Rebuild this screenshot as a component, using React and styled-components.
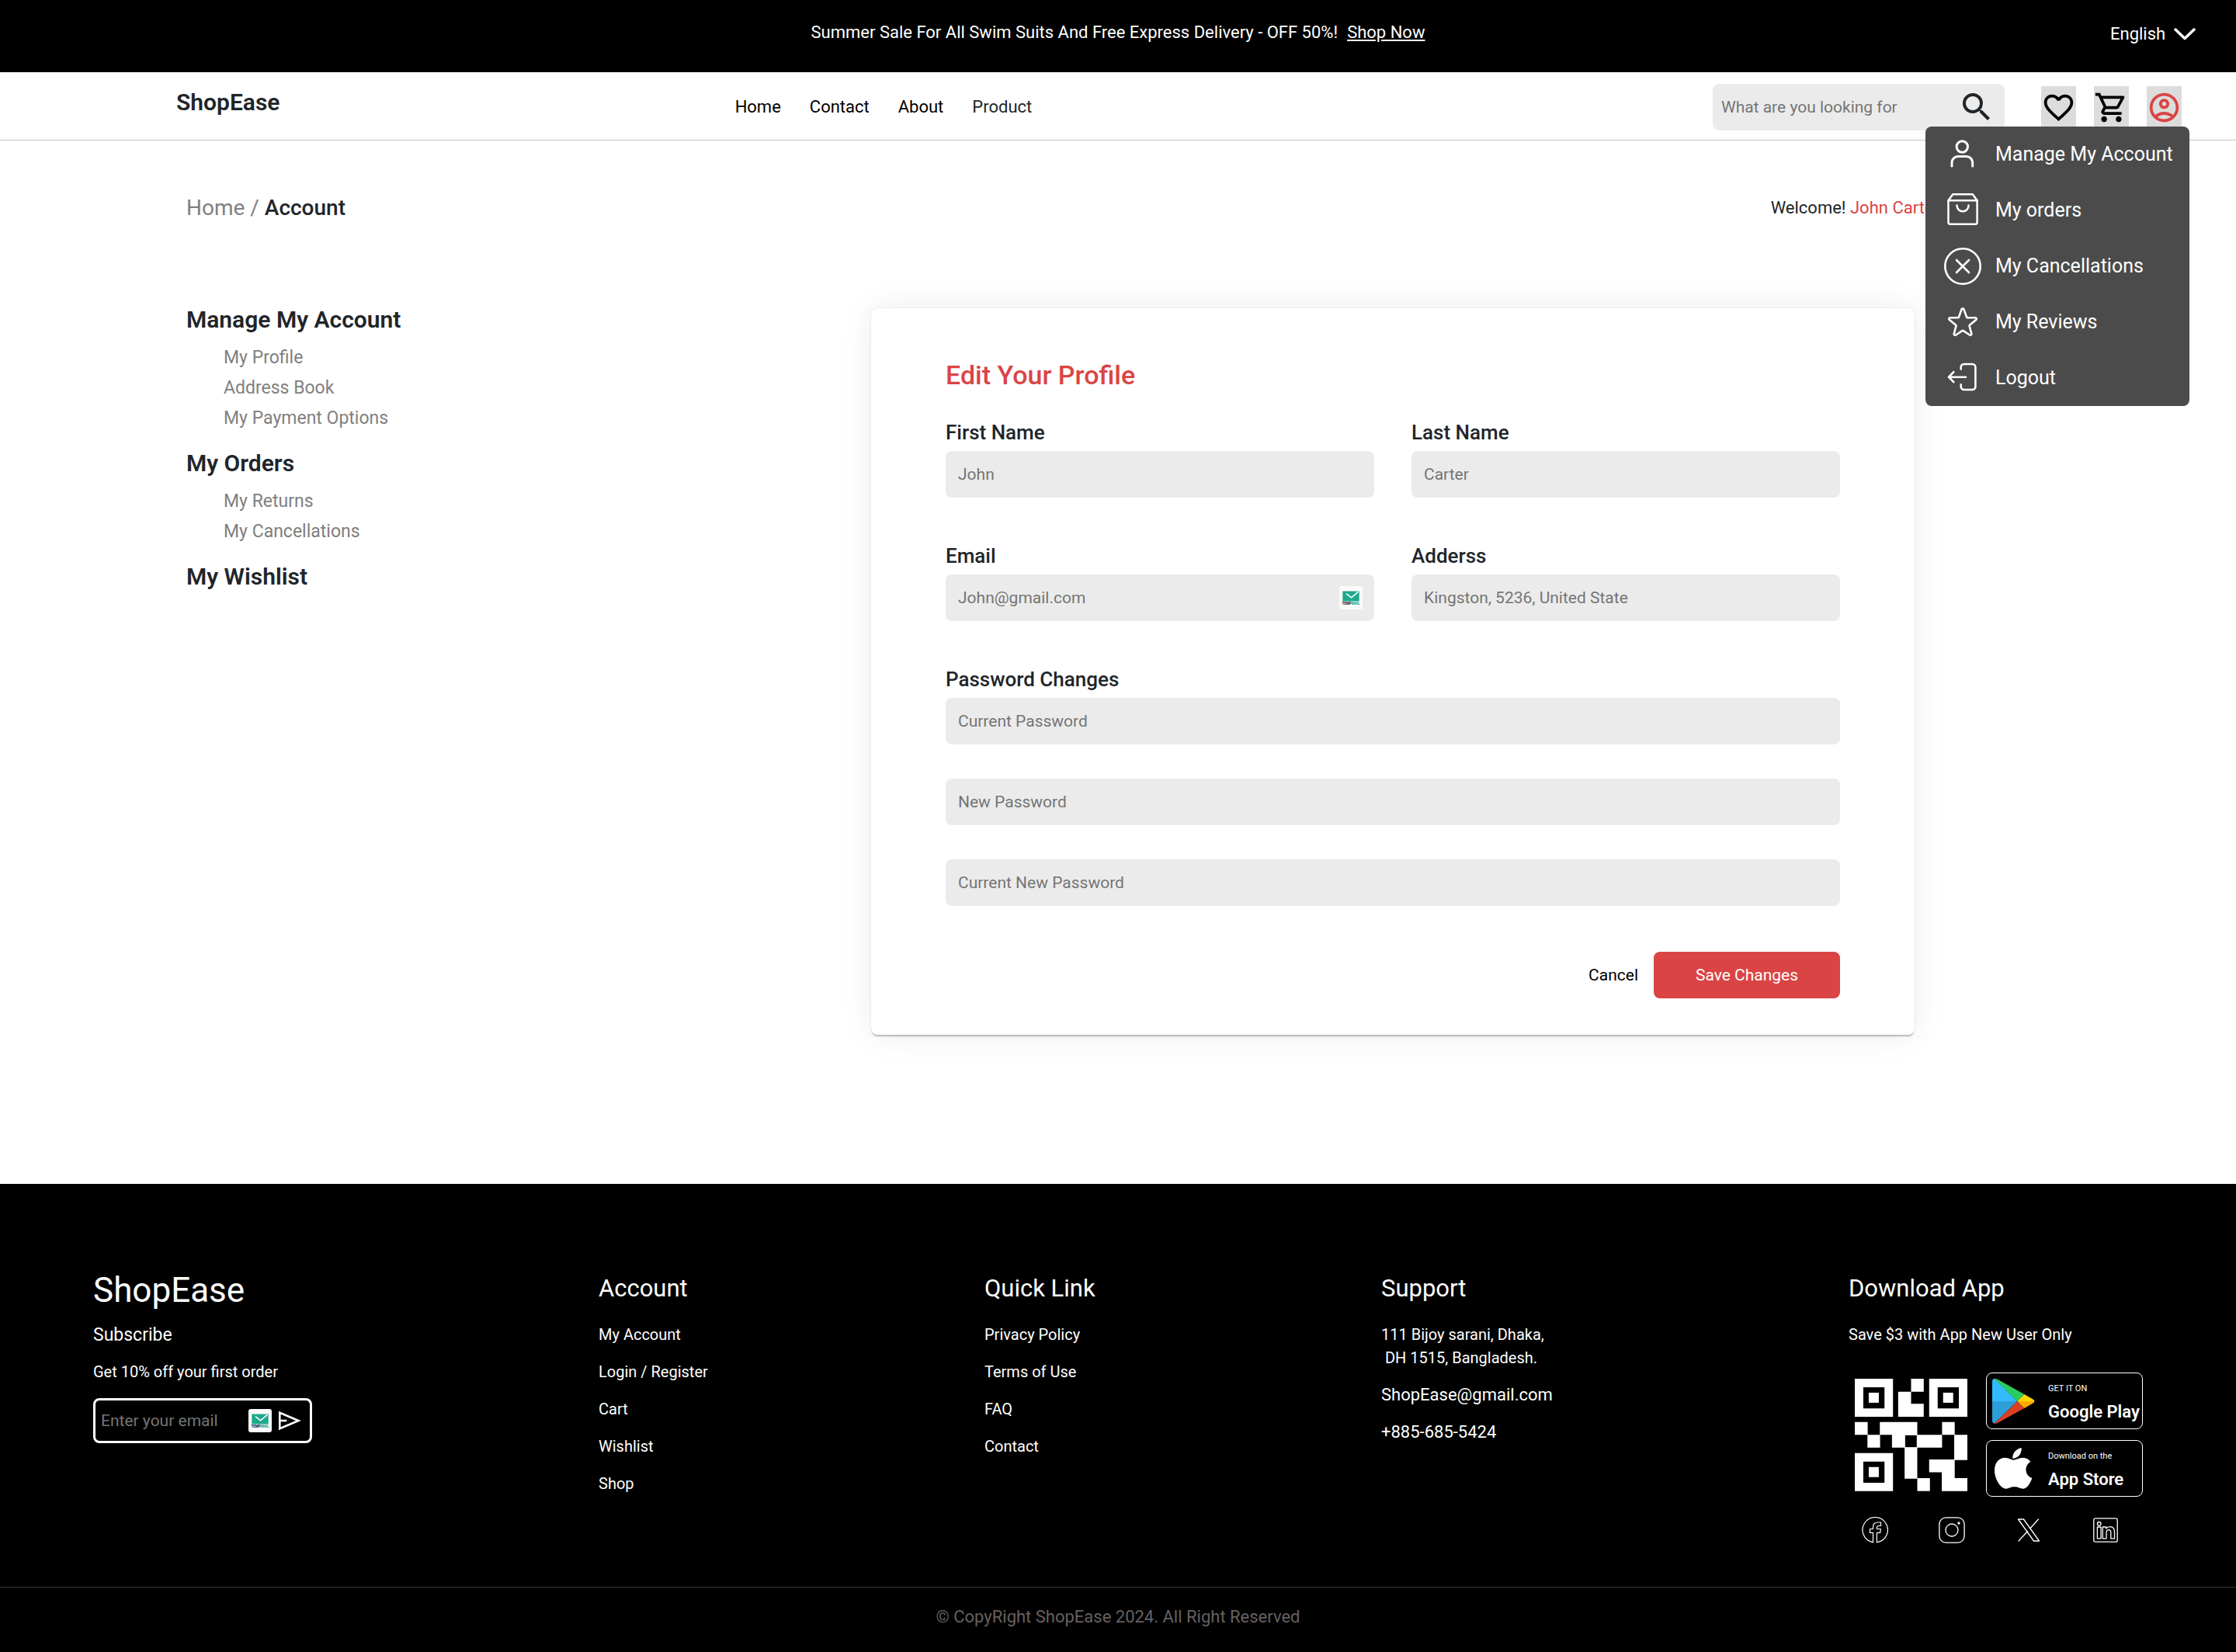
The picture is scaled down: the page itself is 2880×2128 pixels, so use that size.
import React from "react";
import styled, { createGlobalStyle } from "styled-components";
import {
  MdFavoriteBorder,
  MdOutlineShoppingCart,
  MdOutlineAccountCircle,
  MdSearch,
} from "react-icons/md";

const INK = "#212529";
const RED = "#db4444";
const MUTED = "#808080";
const FIELD = "#ebebeb";

const GlobalStyle = createGlobalStyle`
  *, *::before, *::after { box-sizing: border-box; }
  body {
    margin: 0;
    background: #fff;
    color: ${INK};
    font-family: Roboto, "Liberation Sans", sans-serif;
    font-size: 22px;
    line-height: 30px;
    -webkit-font-smoothing: antialiased;
  }
  h1, h2, p, ul, figure { margin: 0; padding: 0; font-weight: 400; }
  ul { list-style: none; }
  a { color: inherit; text-decoration: none; }
  button, input, select { font-family: inherit; border: 0; margin: 0; padding: 0; background: none; color: inherit; }
  button { cursor: pointer; }
  svg { display: block; flex: none; }
  ::placeholder { color: #757575; opacity: 1; }
`;

/* ---------- top banner ---------- */

const Banner = styled.div`
  display: grid;
  grid-template-columns: 1fr auto 1fr;
  align-items: start;
  padding: 27px 52px 32px;
  background: #000;
  color: #fff;
`;

const BannerText = styled.p`
  grid-column: 2;
  line-height: 30px;
`;

const ShopNow = styled.a`
  margin-left: 12px;
  text-decoration: underline;
`;

const Language = styled.label`
  justify-self: end;
  display: flex;
  align-items: center;
  gap: 10px;
`;

const LanguageSelect = styled.select`
  appearance: none;
  font-size: 22px;
  line-height: 34px;
  option { color: #000; }
`;

/* ---------- header ---------- */

const Header = styled.header`
  display: grid;
  grid-template-columns: 720fr 1260fr auto;
  align-items: center;
  padding: 15px 70px 12px 227px;
  border-bottom: 1px solid #c4c4c4;
`;

const Brand = styled.a`
  padding-bottom: 12px;
  font-size: 30px;
  font-weight: 600;
  line-height: 36px;
`;

const Nav = styled.nav`
  display: flex;
  gap: 37px;
`;

const NavLink = styled.a`
  font-size: 22px;
  color: ${(p) => (p.$plain ? INK : "#000")};
`;

const Actions = styled.div`
  display: flex;
  align-items: center;
  gap: 47px;
`;

const SearchBox = styled.form`
  display: flex;
  align-items: center;
  width: 376px;
  height: 60px;
  padding: 0 12px 0 11px;
  border-radius: 8px;
  background: ${FIELD};
`;

const SearchInput = styled.input`
  flex: 1;
  min-width: 0;
  font-size: 21px;
`;

const IconRow = styled.div`
  display: flex;
  gap: 23px;
`;

const IconButton = styled.button`
  display: grid;
  place-items: center;
  width: 45px;
  height: 54px;
  background: #dcdcdc;
  color: ${(p) => (p.$active ? RED : "#000")};
`;

const AccountSlot = styled.div`
  position: relative;
`;

const AccountMenu = styled.ul`
  position: absolute;
  top: 52px;
  right: -10px;
  z-index: 2;
  width: 340px;
  border-radius: 8px;
  background: #4b4b4b;
  color: #fff;
`;

const MenuLink = styled.a`
  display: flex;
  align-items: center;
  gap: 18px;
  height: 72px;
  padding-left: 24px;
  font-size: 25px;
  white-space: nowrap;
`;

/* ---------- page ---------- */

const Main = styled.main`
  padding: 67px 414px 192px 240px;
`;

const TopLine = styled.div`
  display: flex;
  justify-content: space-between;
  align-items: center;
  margin: 0 -32px 109px 0;
`;

const Crumbs = styled.nav`
  font-size: 28px;
  line-height: 40px;
  color: ${MUTED};
`;

const CurrentCrumb = styled.a`
  font-weight: 500;
  color: ${INK};
`;

const Welcome = styled.p`
  font-size: 22px;
`;

const UserName = styled.span`
  color: ${RED};
`;

const Columns = styled.div`
  display: grid;
  grid-template-columns: 882fr 1344fr;
  align-items: start;
`;

const Sidebar = styled.aside`
  display: grid;
  gap: 24px;
`;

const SideTitle = styled.h2`
  font-size: 30px;
  font-weight: 600;
  line-height: 30px;
`;

const SideList = styled.ul`
  padding: 14px 0 0 48px;
  font-size: 23px;
  line-height: 39px;
  color: ${MUTED};
`;

const Card = styled.form`
  padding: 66px 96px 47px;
  border-radius: 8px;
  background: #fff;
  box-shadow: 0 0 40px rgba(0, 0, 0, 0.08), 0 3px 2px -1px rgba(0, 0, 0, 0.25),
    0 0 2px rgba(0, 0, 0, 0.12);
`;

const CardTitle = styled.h1`
  margin-bottom: 36px;
  font-size: 34px;
  font-weight: 500;
  line-height: 40px;
  color: ${RED};
`;

const FieldGrid = styled.div`
  display: grid;
  grid-template-columns: 1fr 1fr;
  gap: 57px 48px;
`;

const Field = styled.div`
  display: grid;
  gap: 6px;
  ${(p) => p.$wide && "grid-column: 1 / -1;"}
`;

const Label = styled.label`
  font-size: 26px;
  font-weight: 500;
  line-height: 36px;
`;

const InputBox = styled.div`
  display: flex;
  align-items: center;
  height: 60px;
  padding: 0 15px 0 16px;
  border-radius: 8px;
  background: ${FIELD};
`;

const Input = styled.input`
  flex: 1;
  min-width: 0;
  height: 100%;
  font-size: 21px;
`;

const Passwords = styled.div`
  display: grid;
  gap: 44px;
`;

const FormActions = styled.div`
  display: flex;
  justify-content: flex-end;
  gap: 20px;
  margin-top: 59px;
`;

const CancelButton = styled.button`
  font-size: 21px;
  color: #000;
`;

const SaveButton = styled.button`
  width: 240px;
  height: 60px;
  border-radius: 8px;
  background: ${RED};
  font-size: 21px;
  color: #fff;
`;

/* ---------- footer ---------- */

const Footer = styled.footer`
  background: #000;
  color: #fff;
`;

const FooterGrid = styled.div`
  display: grid;
  grid-template-columns: 651fr 497fr 511fr 602fr 379fr;
  padding: 113px 120px 56px;
`;

const FooterBrand = styled.p`
  margin-bottom: 20px;
  font-size: 44px;
  line-height: 48px;
`;

const Subscribe = styled.p`
  margin-bottom: 21px;
  font-size: 23px;
  line-height: 28px;
`;

const Offer = styled.p`
  margin-bottom: 22px;
  font-size: 20px;
  line-height: 24px;
`;

const EmailForm = styled.form`
  display: flex;
  align-items: center;
  gap: 8px;
  width: 282px;
  height: 58px;
  padding: 0 11px 0 7px;
  border: 3px solid #fff;
  border-radius: 8px;
`;

const EmailInput = styled.input`
  flex: 1;
  min-width: 0;
  font-size: 21px;
  color: #fff;
`;

const FooterTitle = styled.h2`
  margin-bottom: 22px;
  font-size: 31px;
  line-height: 44px;
`;

const FooterList = styled.ul`
  display: grid;
  gap: 18px;
`;

const FooterItem = styled.li`
  font-size: ${(p) => (p.$large ? 22 : 20)}px;
  line-height: 30px;
  white-space: pre-line;
`;

const Download = styled.div`
  display: flex;
  align-items: center;
  gap: 24px;
  margin-top: 34px;
  padding-left: 8px;
`;

const Badges = styled.div`
  display: grid;
  gap: 14px;
`;

const Badge = styled.a`
  display: flex;
  align-items: center;
  gap: 14px;
  width: 202px;
  height: 73px;
  padding-left: 7px;
  border: 1px solid #fff;
  border-radius: 8px;
`;

const BadgeText = styled.span`
  display: grid;
  gap: 12px;
  padding-top: 4px;
  white-space: nowrap;
`;

const BadgeHint = styled.small`
  font-size: 11px;
  line-height: 13px;
`;

const BadgeName = styled.strong`
  font-size: 22px;
  font-weight: 600;
  line-height: 24px;
`;

const Socials = styled.div`
  display: flex;
  gap: 65px;
  padding: 26px 0 0 17px;
`;

const Copyright = styled.p`
  padding: 23px 0 30px;
  border-top: 1px solid #3a3a3a;
  text-align: center;
  font-size: 22px;
  color: #666060;
`;

/* ---------- drawings ---------- */

const Line = ({ size = 48, box = 48, width = 2.6, children }) => (
  <svg
    width={size}
    height={size}
    viewBox={`0 0 ${box} ${box}`}
    fill="none"
    stroke="currentColor"
    strokeWidth={width}
    strokeLinecap="round"
    strokeLinejoin="round"
    aria-hidden="true"
  >
    {children}
  </svg>
);

const UserIcon = () => (
  <Line width={3}>
    <circle cx="23.3" cy="14" r="7.2" />
    <path d="M10 39v-4.500a8 8 0 0 1 8-8h10.700a8 8 0 0 1 8 8V39" />
  </Line>
);

const BagIcon = () => (
  <Line width={2.5}>
    <path d="M5.500 11.300V39.500a2.200 2.200 0 0 0 2.200 2.200h32.700a2.200 2.200 0 0 0 2.200-2.200V11.300L36.800 3.300H11.300Z" />
    <path d="M5.500 11.300h37.100" />
    <path d="M16.500 17.500c0 4.600 3.300 7.800 7.500 7.800s7.600-3.200 7.600-7.800" />
  </Line>
);

const CancelIcon = () => (
  <Line>
    <circle cx="24" cy="24" r="22.700" />
    <path d="m16 16 16 16M32 16 16 32" />
  </Line>
);

const StarIcon = () => (
  <Line>
    <path d="M22.600 7.200c.5-1.200 2.300-1.200 2.800 0l3.600 10a1.500 1.500 0 0 0 1.400 1h9.900c1.400 0 2 1.800.9 2.700l-8 6.600a1.600 1.600 0 0 0-.5 1.700l2.600 9.600c.4 1.400-1.200 2.500-2.400 1.700l-8-5.400a1.500 1.500 0 0 0-1.700 0l-8 5.400c-1.200.8-2.800-.3-2.400-1.700l2.600-9.600a1.600 1.600 0 0 0-.5-1.700l-8-6.600c-1.100-.9-.5-2.700.9-2.700h9.900a1.500 1.500 0 0 0 1.400-1Z" />
  </Line>
);

const LogoutIcon = () => (
  <Line>
    <path d="M21.700 12.500V10a4 4 0 0 1 4-4h10.700a4 4 0 0 1 4 4v25a4 4 0 0 1-4 4H25.700a4 4 0 0 1-4-4v-2.600" />
    <path d="M28 22.700H6M12.300 16.200 6 22.700l6.300 6.500" />
  </Line>
);

const ChevronIcon = () => (
  <svg width="28" height="18" viewBox="0 0 28 18" fill="none" stroke="currentColor" strokeWidth="3.500" strokeLinecap="round" strokeLinejoin="round" aria-hidden="true">
    <path d="m2 3 12 11.500L26 3" />
  </svg>
);

const TempMailIcon = () => (
  <svg width="30" height="30" viewBox="0 0 30 30" aria-hidden="true">
    <rect width="30" height="30" rx="3" fill="#fafafa" />
    <path d="M4.300 6.400H22l3.700 3v10H4.300Z" fill="#1fa98c" />
    <path d="M25.700 6.400v3L22.500 6.400Z" fill="#0f7f68" />
    <path d="m9 9.600 6.600 5.200 9-7.600" fill="none" stroke="#fff" strokeWidth="1.600" />
    <text x="15" y="24.300" textAnchor="middle" fontSize="4.500" fontWeight="900" fill="#1f2a44">
      TEMP<tspan fill="#1fa98c">MAIL</tspan>
    </text>
  </svg>
);

const SendIcon = () => (
  <svg width="30" height="26" viewBox="0 0 30 26" fill="none" stroke="currentColor" strokeWidth="2.600" aria-hidden="true">
    <path d="M2.300 2.700 26.500 13 2.300 23.300Z" />
    <path d="M2.300 13h9" />
  </svg>
);

const QrCode = () => (
  <svg width="145" height="145" viewBox="0 0 436 436" fill="#fff" role="img" aria-label="QR code">
    {[[0, 0], [288, 0], [0, 288]].map(([x, y]) => (
      <g key={`${x}-${y}`} transform={`translate(${x} ${y})`}>
        <path fillRule="evenodd" d="M0 0H148V147H0ZM33 33V115H115V33Z" />
        <rect x="54" y="54" width="39" height="39" />
      </g>
    ))}
    <path d="M218 0H267V50H218V97H267V147H168V50H218Z" />
    <path d="M0 168H50V217H98V267H49V217H0Z" />
    <path d="M97 168H242V217H338V168H387V217H436V315H385V217H338V267H242V387H193V267H144V217H97Z" />
    <path d="M242 385H291V435H242Z" />
    <path d="M288 313H387V385H436V435H337V362H288Z" />
    <rect x="195" y="219" width="45" height="46" fill="#000" />
  </svg>
);

const PlayLogo = () => (
  <svg width="58" height="60" viewBox="0 0 174 180" aria-hidden="true">
    <path d="M0 14C0 7 3 3 8 2L97 90H0Z" fill="#32bbff" />
    <path d="M0 90H97L8 176c-5-1-8-5-8-11Z" fill="#2c9fd9" />
    <path d="M8 4C13 2 18 4 22 6L124 63 97 90Z" fill="#29cc5e" />
    <path d="M8 176c5 1 10-1 14-3L124 117 97 90Z" fill="#d93f21" />
    <path d="M97 90 124 63 154 80c6 3 9 6 9 10Z" fill="#ffd500" />
    <path d="M97 90H163c0 4-3 7-9 10L124 117Z" fill="#ffaa00" />
  </svg>
);

const AppleLogo = () => (
  <svg width="58" height="60" viewBox="0 0 174 180" fill="#fff" aria-hidden="true">
    <path d="M113 9c1 13-3 23-10 31-7 7-15 10-24 10-1-11 3-21 10-28 6-7 15-12 24-13Z" />
    <path d="M83 56c8 0 20-9 36-9 12 1 23 6 29 15-26 17-22 54 6 64-6 17-18 41-34 41-13 0-18-7-34-7s-22 7-33 7C33 167 9 130 9 96c0-33 21-49 40-49 14 0 26 9 34 9Z" />
  </svg>
);

const FacebookIcon = () => (
  <Line size={34} box={34} width={1.2}>
    <path d="M14.200 32.600A16.200 16.200 0 1 1 20.200 32.600" />
    <path d="M14.500 32.700V20.300h-4v-4.800h4v-2.600c0-3.800 2.300-5.900 6.200-5.900h3.800v4.500h-2.600c-1.800 0-2.500.8-2.500 2.300v1.700h5l-.7 4.800h-4.300v12.400" />
  </Line>
);

const InstagramIcon = () => (
  <Line size={34} box={34} width={1.3}>
    <rect x="0.900" y="0.900" width="32.200" height="32.200" rx="8.500" />
    <circle cx="17" cy="17" r="8" />
    <circle cx="26" cy="8" r="1" fill="currentColor" />
  </Line>
);

const XIcon = () => (
  <Line size={34} box={34} width={1.3}>
    <path d="M3.500 3h7l20 28h-7Z" />
    <path d="M29.500 3 18.700 15M15.500 18.500 4 31" />
  </Line>
);

const LinkedinIcon = () => (
  <Line size={34} box={34} width={1.3}>
    <rect x="1.800" y="1.800" width="30.400" height="30.400" rx="2" />
    <circle cx="8.700" cy="8.800" r="2.300" />
    <rect x="6.400" y="13" width="4.700" height="14.800" />
    <path d="M13.300 13h4.500v2c1-1.600 2.600-2.400 4.700-2.400 4 0 6 2.500 6 6.700v8.500h-4.700v-7.700c0-2.200-.8-3.500-2.600-3.500-2.100 0-3.200 1.400-3.200 3.700v7.500h-4.700Z" />
  </Line>
);

/* ---------- data ---------- */

const NAV = [
  { text: "Home" },
  { text: "Contact" },
  { text: "About" },
  { text: "Product", plain: true },
];

const MENU = [
  { text: "Manage My Account", Icon: UserIcon },
  { text: "My orders", Icon: BagIcon },
  { text: "My Cancellations", Icon: CancelIcon },
  { text: "My Reviews", Icon: StarIcon },
  { text: "Logout", Icon: LogoutIcon },
];

const SIDE = [
  { title: "Manage My Account", items: ["My Profile", "Address Book", "My Payment Options"] },
  { title: "My Orders", items: ["My Returns", "My Cancellations"] },
  { title: "My Wishlist", items: [] },
];

const FIELDS = [
  { id: "first-name", label: "First Name", hint: "John", type: "text" },
  { id: "last-name", label: "Last Name", hint: "Carter", type: "text" },
  { id: "email", label: "Email", hint: "John@gmail.com", type: "email", mail: true },
  { id: "address", label: "Adderss", hint: "Kingston, 5236, United State", type: "text" },
];

const PASSWORDS = [
  { id: "current-password", hint: "Current Password" },
  { id: "new-password", hint: "New Password" },
  { id: "confirm-password", hint: "Current New Password" },
];

const LINKS = [
  { title: "Account", items: ["My Account", "Login / Register", "Cart", "Wishlist", "Shop"] },
  { title: "Quick Link", items: ["Privacy Policy", "Terms of Use", "FAQ", "Contact"] },
];

const SOCIALS = [
  { name: "Facebook", Icon: FacebookIcon },
  { name: "Instagram", Icon: InstagramIcon },
  { name: "X", Icon: XIcon },
  { name: "LinkedIn", Icon: LinkedinIcon },
];

const stop = (e) => e.preventDefault();

export default function App() {
  return (
    <>
      <GlobalStyle />
      <Banner>
        <BannerText>
          Summer Sale For All Swim Suits And Free Express Delivery - OFF 50%!
          <ShopNow href="#shop">Shop Now</ShopNow>
        </BannerText>
        <Language>
          <LanguageSelect aria-label="Language" defaultValue="en">
            <option value="en">English</option>
          </LanguageSelect>
          <ChevronIcon />
        </Language>
      </Banner>

      <Header>
        <Brand href="#home">ShopEase</Brand>
        <Nav>
          {NAV.map((n) => (
            <NavLink key={n.text} href="#nav" $plain={n.plain}>
              {n.text}
            </NavLink>
          ))}
        </Nav>
        <Actions>
          <SearchBox onSubmit={stop}>
            <SearchInput aria-label="Search" placeholder="What are you looking for" />
            <button type="submit" aria-label="Search">
              <MdSearch size={48} />
            </button>
          </SearchBox>
          <IconRow>
            <IconButton type="button" aria-label="Wishlist">
              <MdFavoriteBorder size={45} />
            </IconButton>
            <IconButton type="button" aria-label="Cart">
              <MdOutlineShoppingCart size={45} />
            </IconButton>
            <AccountSlot>
              <IconButton type="button" aria-label="Account" $active>
                <MdOutlineAccountCircle size={45} />
              </IconButton>
              <AccountMenu>
                {MENU.map(({ text, Icon }) => (
                  <li key={text}>
                    <MenuLink href="#menu">
                      <Icon />
                      {text}
                    </MenuLink>
                  </li>
                ))}
              </AccountMenu>
            </AccountSlot>
          </IconRow>
        </Actions>
      </Header>

      <Main>
        <TopLine>
          <Crumbs>
            <a href="#home">Home</a> / <CurrentCrumb href="#account">Account</CurrentCrumb>
          </Crumbs>
          <Welcome>
            Welcome! <UserName>John Carter</UserName>
          </Welcome>
        </TopLine>
        <Columns>
          <Sidebar>
            {SIDE.map((s) => (
              <section key={s.title}>
                <SideTitle>{s.title}</SideTitle>
                {s.items.length > 0 && (
                  <SideList>
                    {s.items.map((t) => (
                      <li key={t}>
                        <a href="#section">{t}</a>
                      </li>
                    ))}
                  </SideList>
                )}
              </section>
            ))}
          </Sidebar>
          <Card onSubmit={stop}>
            <CardTitle>Edit Your Profile</CardTitle>
            <FieldGrid>
              {FIELDS.map((f) => (
                <Field key={f.id}>
                  <Label htmlFor={f.id}>{f.label}</Label>
                  <InputBox>
                    <Input id={f.id} type={f.type} placeholder={f.hint} />
                    {f.mail && <TempMailIcon />}
                  </InputBox>
                </Field>
              ))}
              <Field $wide>
                <Label htmlFor={PASSWORDS[0].id}>Password Changes</Label>
                <Passwords>
                  {PASSWORDS.map((p) => (
                    <InputBox key={p.id}>
                      <Input id={p.id} type="password" aria-label={p.hint} placeholder={p.hint} />
                    </InputBox>
                  ))}
                </Passwords>
              </Field>
            </FieldGrid>
            <FormActions>
              <CancelButton type="button">Cancel</CancelButton>
              <SaveButton type="submit">Save Changes</SaveButton>
            </FormActions>
          </Card>
        </Columns>
      </Main>

      <Footer>
        <FooterGrid>
          <section>
            <FooterBrand>ShopEase</FooterBrand>
            <Subscribe>Subscribe</Subscribe>
            <Offer>Get 10% off your first order</Offer>
            <EmailForm onSubmit={stop}>
              <EmailInput type="email" aria-label="Enter your email" placeholder="Enter your email" />
              <TempMailIcon />
              <button type="submit" aria-label="Send">
                <SendIcon />
              </button>
            </EmailForm>
          </section>
          {LINKS.map((c) => (
            <section key={c.title}>
              <FooterTitle>{c.title}</FooterTitle>
              <FooterList>
                {c.items.map((t) => (
                  <FooterItem key={t}>
                    <a href="#footer">{t}</a>
                  </FooterItem>
                ))}
              </FooterList>
            </section>
          ))}
          <section>
            <FooterTitle>Support</FooterTitle>
            <FooterList>
              <FooterItem>{"111 Bijoy sarani, Dhaka,\n\u00a0DH 1515, Bangladesh."}</FooterItem>
              <FooterItem $large>ShopEase@gmail.com</FooterItem>
              <FooterItem $large>+885-685-5424</FooterItem>
            </FooterList>
          </section>
          <section>
            <FooterTitle>Download App</FooterTitle>
            <FooterItem as="p">Save $3 with App New User Only</FooterItem>
            <Download>
              <QrCode />
              <Badges>
                <Badge href="#google-play">
                  <PlayLogo />
                  <BadgeText>
                    <BadgeHint>GET IT ON</BadgeHint>
                    <BadgeName>Google Play</BadgeName>
                  </BadgeText>
                </Badge>
                <Badge href="#app-store">
                  <AppleLogo />
                  <BadgeText>
                    <BadgeHint>Download on the</BadgeHint>
                    <BadgeName>App Store</BadgeName>
                  </BadgeText>
                </Badge>
              </Badges>
            </Download>
            <Socials>
              {SOCIALS.map(({ name, Icon }) => (
                <a key={name} href="#social" aria-label={name}>
                  <Icon />
                </a>
              ))}
            </Socials>
          </section>
        </FooterGrid>
        <Copyright>© CopyRight ShopEase 2024. All Right Reserved</Copyright>
      </Footer>
    </>
  );
}
